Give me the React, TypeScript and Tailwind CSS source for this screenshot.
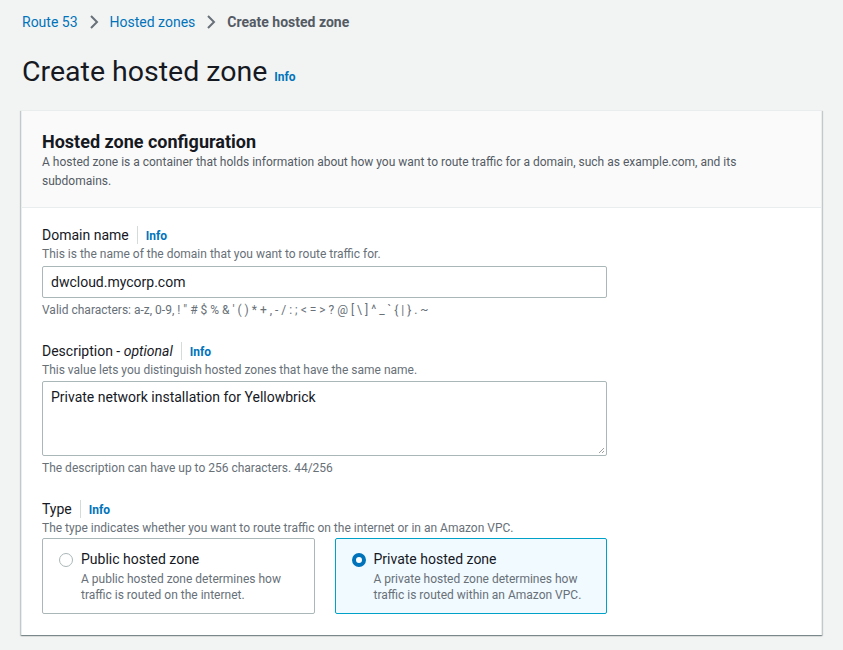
import React from "react";

const Info = () => (
  <span className="text-[12px] font-bold text-[#0073bb]">Info</span>
);

const Label = ({ children }: { children: React.ReactNode }) => (
  <div className="flex items-center h-[20px]">
    <span className="text-[14px] text-[#16191f] pr-[8px] border-r border-[#d5dbdb] leading-[18px]">{children}</span>
    <span className="pl-[8px]"><Info /></span>
  </div>
);

const Desc = ({ children }: { children: React.ReactNode }) => (
  <div className="text-[12px] text-[#687078] leading-[18px]">{children}</div>
);

export default function App() {
  return (
    <div className="min-h-[650px] bg-[#f2f3f3] pl-[21px] pr-[21px] pt-[12px] pb-[16px]" style={{ fontFamily: "Roboto, 'Noto Sans', sans-serif" }}>
      <nav className="flex items-center h-[20px] text-[14px] pl-[1px]">
        <span className="text-[#0073bb]">Route 53</span>
        <svg width="10" height="14" viewBox="0 0 10 14" className="mx-[11px]"><path d="M2 1l6 6-6 6" fill="none" stroke="#687078" strokeWidth="2" /></svg>
        <span className="text-[#0073bb]">Hosted zones</span>
        <svg width="10" height="14" viewBox="0 0 10 14" className="mx-[11px]"><path d="M2 1l6 6-6 6" fill="none" stroke="#687078" strokeWidth="2" /></svg>
        <span className="text-[#545b64] font-bold">Create hosted zone</span>
      </nav>
      <div className="flex items-baseline gap-[7px] mt-[22px] h-[36px] pl-[1px]">
        <h1 className="text-[28.5px] leading-[36px] text-[#16191f]">Create hosted zone</h1>
        <Info />
      </div>
      <div className="mt-[20px] bg-white border-l border-t border-r border-[#eaeded] shadow-[0_1px_1px_0_rgba(0,28,36,0.3),1px_1px_1px_0_rgba(0,28,36,0.15),-1px_1px_1px_0_rgba(0,28,36,0.15)]">
        <div className="bg-[#fafafa] border-b border-[#eaeded] px-[20px] pt-[19px] pb-[16px]">
          <h2 className="text-[18px] font-bold text-[#16191f] leading-[24px]">Hosted zone configuration</h2>
          <p className="text-[12px] text-[#545b64] leading-[19px] -mt-[1px] pr-[40px]">
            A hosted zone is a container that holds information about how you want to route traffic for a domain, such as example.com, and its subdomains.
          </p>
        </div>
        <div className="px-[20px] pt-[17px] pb-[21px] flex flex-col gap-[22px]">
          <div className="w-[565px]">
            <Label>Domain name</Label>
            <Desc>This is the name of the domain that you want to route traffic for.</Desc>
            <div className="mt-[3px] h-[32px] border border-[#aab7b8] rounded-[2px] flex items-center px-[8px] text-[14px] text-[#16191f]">dwcloud.mycorp.com</div>
            <div className="mt-[3px]"><Desc>Valid characters: a-z, 0-9, ! " # $ % &amp; ' ( ) * + , - / : ; &lt; = &gt; ? @ [ \ ] ^ _ ` {"{"} | {"}"} . ~</Desc></div>
          </div>
          <div className="w-[565px]">
            <Label>Description - <i>optional</i></Label>
            <Desc>This value lets you distinguish hosted zones that have the same name.</Desc>
            <div className="relative mt-[2px] h-[75px] border border-[#aab7b8] rounded-[2px] px-[8px] pt-[5px] text-[14px] text-[#16191f]">
              Private network installation for Yellowbrick
              <svg className="absolute right-[1px] bottom-[1px]" width="7" height="7" viewBox="0 0 7 7"><path d="M6 1L1 6M6 4L4 6" stroke="#888" strokeWidth="0.8" /></svg>
            </div>
            <div className="mt-[3px]"><Desc>The description can have up to 256 characters. 44/256</Desc></div>
          </div>
          <div>
            <Label>Type</Label>
            <Desc>The type indicates whether you want to route traffic on the internet or in an Amazon VPC.</Desc>
            <div className="mt-[1px] flex gap-[20px] w-[565px]">
              <div className="flex-1 h-[76px] border border-[#aab7b8] rounded-[2px] px-[16px] pt-[11px] flex gap-[8px]">
                <span className="mt-[3px] w-[14px] h-[14px] rounded-full border border-[#aab7b8] bg-white shrink-0"></span>
                <div>
                  <div className="text-[14px] text-[#16191f] leading-[19px]">Public hosted zone</div>
                  <div className="text-[12px] text-[#687078] leading-[16px] mt-[2px]">A public hosted zone determines how traffic is routed on the internet.</div>
                </div>
              </div>
              <div className="flex-1 h-[76px] border border-[#00a1c9] bg-[#f1faff] rounded-[2px] px-[16px] pt-[11px] flex gap-[8px]">
                <span className="mt-[3px] w-[14px] h-[14px] rounded-full border-[4px] border-[#0073bb] bg-white shrink-0"></span>
                <div>
                  <div className="text-[14px] text-[#16191f] leading-[19px]">Private hosted zone</div>
                  <div className="text-[12px] text-[#687078] leading-[16px] mt-[2px]">A private hosted zone determines how traffic is routed within an Amazon VPC.</div>
                </div>
              </div>
            </div>
          </div>
        </div>
      </div>
    </div>
  );
}
